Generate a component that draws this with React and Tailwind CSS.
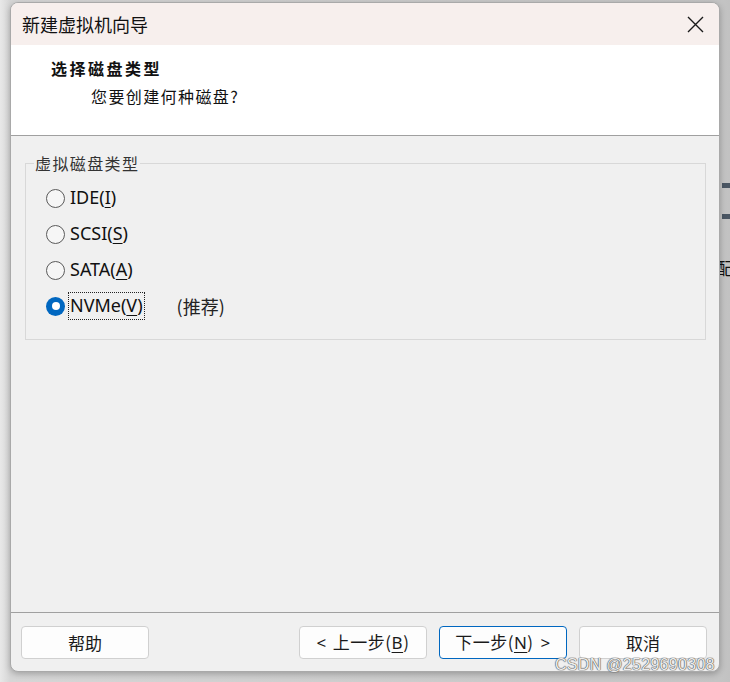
import React from "react";

const sans = "font-['Noto_Sans','Noto_Sans_CJK_SC',sans-serif]";
const cjk = "font-['Noto_Sans_CJK_SC',sans-serif]";

function Radio({ checked }) {
  if (checked) {
    return (
      <span className="w-[19px] h-[19px] rounded-full bg-[#0067c0] flex items-center justify-center shrink-0">
        <span className="w-[8px] h-[8px] rounded-full bg-white" />
      </span>
    );
  }
  return (
    <span className="w-[19px] h-[19px] rounded-full border border-[#5a5a5a] bg-[#f6f6f6] shrink-0" />
  );
}

function Option({ label, k, checked, extra }) {
  const idx = label.indexOf("(");
  const pre = label.slice(0, idx + 1);
  const body = (
    <span className={`text-[18px] leading-[20px] text-[#111] ${sans}`}>
      {pre}
      <span className="underline underline-offset-[3px] decoration-[1px]">{k}</span>
      )
    </span>
  );
  return (
    <div className="flex items-center h-[36px]">
      <Radio checked={checked} />
      <span
        className={`ml-[4px] px-[1px] py-[1px] ${checked ? "outline outline-1 outline-dotted outline-[#222]" : ""}`}
      >
        {body}
      </span>
      {extra && (
        <span className={`ml-[33px] text-[18px] text-[#222] ${cjk}`}>{extra}</span>
      )}
    </div>
  );
}

function Btn({ children, primary }) {
  return (
    <div
      className={`w-[128px] h-[33px] rounded-[4px] bg-[#fdfdfd] flex items-center justify-center text-[17px] text-[#1a1a1a] ${cjk} ${
        primary ? "border border-[#0067c0]" : "border border-[#d0d0d0]"
      }`}
    >
      {children}
    </div>
  );
}

export default function App() {
  return (
    <div className="relative w-[730px] h-[682px] overflow-hidden bg-[linear-gradient(90deg,#e8e8e8_0px,#d6d6d6_10px,#c4c4c4_720px,#c2c2c2_730px)]">
      {/* background desktop bits on the right */}
      <div className="absolute left-[722px] top-[183px] w-[8px] h-[5px] bg-[#4a5663]" />
      <div className="absolute left-[722px] top-[214px] w-[8px] h-[5px] bg-[#4a5663]" />
      <div className={`absolute left-[716px] top-[255px] text-[17px] text-[#111] ${cjk}`}>配</div>

      {/* window */}
      <div className="relative ml-[10px] mt-[2px] w-[710px] h-[670px] rounded-[8px] border border-[#a9a9a9] bg-[#f0f0f0] overflow-hidden flex flex-col shadow-[0_2px_6px_rgba(0,0,0,0.25)]">
        {/* title bar */}
        <div className="h-[42px] bg-[#f7efed] flex items-center justify-between pl-[11px] pr-[12px] shrink-0">
          <span className={`text-[18px] text-[#111] ${cjk}`}>新建虚拟机向导</span>
          <svg width="17" height="17" viewBox="0 0 17 17" className="mr-[3px]">
            <path d="M1 1 L16 16 M16 1 L1 16" stroke="#1a1a1a" strokeWidth="1.4" />
          </svg>
        </div>
        {/* header */}
        <div className="h-[91px] bg-white border-b border-[#a0a0a0] shrink-0 pl-[40px] pt-[12px]">
          <div className={`text-[16px] font-bold tracking-[2.5px] leading-[22px] text-[#111] ${cjk}`}>选择磁盘类型</div>
          <div className={`ml-[40px] mt-[6px] text-[16px] tracking-[1.4px] leading-[22px] text-[#111] ${cjk}`}>您要创建何种磁盘?</div>
        </div>
        {/* body */}
        <div className="flex-1 px-[14px] pt-[27px]">
          <div className="relative border border-[#d8d8d8] h-[177px] w-[681px] pl-[20px] pt-[16px]">
            <span className={`absolute left-[8px] top-[-12px] bg-[#f0f0f0] px-[1px] text-[16px] tracking-[1.4px] leading-[22px] text-[#333] ${cjk}`}>
              虚拟磁盘类型
            </span>
            <Option label="IDE(I)" k="I" />
            <Option label="SCSI(S)" k="S" />
            <Option label="SATA(A)" k="A" />
            <Option label="NVMe(V)" k="V" checked extra="(推荐)" />
          </div>
        </div>
        {/* footer */}
        <div className="h-[59px] border-t border-[#a0a0a0] shrink-0 flex items-start pt-[13px] pl-[10px] pr-[12px]">
          <Btn>帮助</Btn>
          <div className="flex-1" />
          <div className="flex gap-[12px]">
            <Btn>
              <span className="tracking-[0.5px]">
                <span className={`${sans} mr-[6px]`}>&lt;</span>上一步(<span className={`underline underline-offset-[3px] ${sans}`}>B</span>)
              </span>
            </Btn>
            <Btn primary>
              <span className="tracking-[0.5px]">
                下一步(<span className={`underline underline-offset-[3px] ${sans}`}>N</span>)<span className={`${sans} ml-[7px]`}>&gt;</span>
              </span>
            </Btn>
            <Btn>取消</Btn>
          </div>
        </div>
      </div>

      {/* watermark */}
      <div
        className={`absolute left-[555px] top-[655px] text-[16px] tracking-[0.3px] leading-[20px] text-[#ededed] font-['Liberation_Sans',sans-serif] [text-shadow:0_0_1px_#555,0_0_1px_#555,0_0_1px_#555]`}
      >
        CSDN @2529690308
      </div>
    </div>
  );
}
